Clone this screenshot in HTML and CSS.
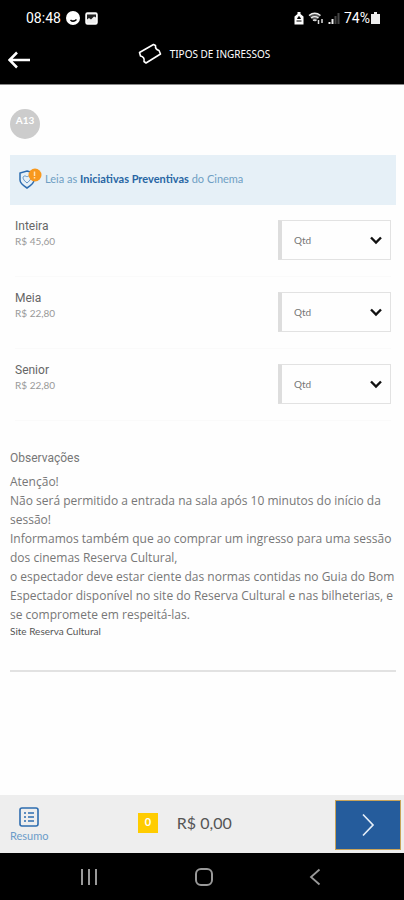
FILE: index.html
```html
<!DOCTYPE html>
<html lang="pt-BR">
<head>
<meta charset="utf-8">
<meta name="viewport" content="width=device-width, initial-scale=1">
<title>Tipos de ingressos</title>
<link rel="stylesheet" href="styles.css">
</head>
<body>
<header class="top">
  <div class="status">
    <div class="status-group">
      <span class="clock">08:48</span>
      <svg width="14" height="14" viewBox="0 0 14 14" aria-hidden="true"><circle cx="7" cy="7" r="7" fill="#fff"/><path d="M4.500 9c1.500 1.500 4 1.500 6-.5" fill="none" stroke="#000" stroke-width="1.500"/></svg>
      <svg width="13" height="13" viewBox="0 0 13 13" aria-hidden="true"><rect x="1" y="1" width="11" height="11" rx="1.500" fill="#eee" stroke="#fff" stroke-width="1.500"/><path d="M2 2.500h9v3L9 4.500 6 7.500 4 6 2 7.500z" fill="#222"/></svg>
    </div>
    <div class="status-group status-right">
      <svg width="10" height="13" viewBox="0 0 10 13" aria-hidden="true"><path d="M3.500 0h3v2L9.500 4.500v8h-9v-8L3.500 2z" fill="#fff"/><path d="M5 4.500l1.500 2h-3zM2.500 9h5" fill="#000" stroke="#000"/></svg>
      <svg width="16" height="13" viewBox="0 0 16 13" aria-hidden="true"><path d="M1 3.500c4-3 7.500-3 11.500 0L7 10z" fill="#555"/><path d="M1 3.500c4-3 7.500-3 11.500 0M3 6c3-2 4.500-2 7.500 0M5 8.500c1.500-1 2-1 3.500 0" fill="none" stroke="#eee" stroke-width="1.500"/><path d="M10.500 8v4M14 7v4" stroke="#ddd" stroke-width="1.500"/></svg>
      <svg width="12" height="13" viewBox="0 0 12 13" aria-hidden="true"><path d="M1.500 10v2M4.500 7v5" stroke="#eee" stroke-width="2"/><path d="M7.500 4v8M10.500 1v11" stroke="#444" stroke-width="2"/></svg>
      <span class="battery">74%<svg width="9" height="12" viewBox="0 0 9 12" aria-hidden="true"><path d="M3 0h3v2h3v10H0V2h3z" fill="#eee"/></svg></span>
    </div>
  </div>
  <div class="title-bar">
    <button class="back" type="button" aria-label="Voltar">
      <svg width="24" height="18" viewBox="0 0 24 18"><path d="M22 9H2M9 1.500L1.500 9 9 16.500" fill="none" stroke="#fff" stroke-width="2.500"/></svg>
    </button>
    <svg width="24" height="22" viewBox="0 0 24 22" aria-hidden="true"><path d="M1.500 9.500L15.500 1.500 17.500 2.500c-.3 3 1.500 4.500 3.500 5l1.500 3.500L8 20l-2-1.500c.8-3-1-5-3.500-5.500z" fill="none" stroke="#fff" stroke-width="1.600" stroke-linejoin="round"/></svg>
    <h1>TIPOS DE INGRESSOS</h1>
  </div>
</header>
<main>
  <div class="seat">A13</div>
  <a class="notice" href="#">
    <svg width="24" height="24" viewBox="0 0 24 24" aria-hidden="true"><path d="M9 4L16 6v7c0 3.500-3 5.500-7 8-4-2.500-7-4.500-7-8V6z" fill="none" stroke="#2e6db0" stroke-width="1.500"/><path d="M9 16c-5-4-4.500-6.500-2.500-7 1.500-.2 2.500 1 2.500 1s1-1.200 2.500-1c2 .5 2.500 3-2.500 7z" fill="none" stroke="#5c90c4"/><circle cx="17" cy="8" r="6.500" fill="#f8981d"/><path d="M16.500 4.500v4.500M16.500 10v1.500" stroke="#ffe0b5" stroke-width="1.500"/></svg>
    <span>Leia as <strong>Iniciativas Preventivas</strong> do Cinema</span>
  </a>
  <ul class="tickets">
    <li>
      <label for="inteira"><span class="kind">Inteira</span><span class="price">R$ 45,60</span></label>
      <div class="qty"><select id="inteira"><option>Qtd</option></select><svg width="12" height="9" viewBox="0 0 12 9" aria-hidden="true"><path d="M1 1.500l5 5 5-5" fill="none" stroke="#111" stroke-width="2.400"/></svg></div>
    </li>
    <li>
      <label for="meia"><span class="kind">Meia</span><span class="price">R$ 22,80</span></label>
      <div class="qty"><select id="meia"><option>Qtd</option></select><svg width="12" height="9" viewBox="0 0 12 9" aria-hidden="true"><path d="M1 1.500l5 5 5-5" fill="none" stroke="#111" stroke-width="2.400"/></svg></div>
    </li>
    <li>
      <label for="senior"><span class="kind">Senior</span><span class="price">R$ 22,80</span></label>
      <div class="qty"><select id="senior"><option>Qtd</option></select><svg width="12" height="9" viewBox="0 0 12 9" aria-hidden="true"><path d="M1 1.500l5 5 5-5" fill="none" stroke="#111" stroke-width="2.400"/></svg></div>
    </li>
  </ul>
  <section class="notes">
    <h2>Observações</h2>
    <p>Atenção!<br>Não será permitido a entrada na sala após 10 minutos do início da sessão!<br>Informamos também que ao comprar um ingresso para uma sessão dos cinemas Reserva Cultural,<br>o espectador deve estar ciente das normas contidas no Guia do Bom Espectador disponível no site do Reserva Cultural e nas bilheterias, e se compromete em respeitá-las.</p>
    <a class="site" href="#">Site Reserva Cultural</a>
  </section>
</main>
<footer>
  <div class="cart">
    <button class="summary" type="button">
      <svg width="20" height="20" viewBox="0 0 20 20" aria-hidden="true"><rect x="1" y="1" width="18" height="18" rx="2" fill="none" stroke="#2e6db0" stroke-width="1.600"/><path d="M5 6h2M5 10h2M5 14h2M9 6h6M9 10h6M9 14h6" stroke="#2e6db0" stroke-width="1.600"/></svg>
      <span>Resumo</span>
    </button>
    <div class="total"><span class="count">0</span><span>R$ 0,00</span></div>
    <button class="next" type="button" aria-label="Continuar">
      <svg width="14" height="24" viewBox="0 0 14 24"><path d="M2 1.500L12 12 2 22.500" fill="none" stroke="#e4eef8" stroke-width="1.700"/></svg>
    </button>
  </div>
  <nav class="system">
    <button type="button" aria-label="Recentes"><svg width="18" height="18" viewBox="0 0 18 18"><path d="M2 1v16M9 1v16M16 1v16" stroke="#999" stroke-width="2"/></svg></button>
    <button type="button" aria-label="Início"><svg width="20" height="20" viewBox="0 0 20 20"><rect x="2" y="2" width="16" height="16" rx="5" fill="none" stroke="#999" stroke-width="2"/></svg></button>
    <button type="button" aria-label="Anterior"><svg width="12" height="18" viewBox="0 0 12 18"><path d="M10.500 1.500L2 9l8.500 7.500" fill="none" stroke="#999" stroke-width="1.800"/></svg></button>
  </nav>
</footer>
</body>
</html>
```
FILE: styles.css
```css
* { box-sizing: border-box; }
body {
  margin: 0;
  min-height: 100vh;
  display: flex;
  flex-direction: column;
  background: #fefefe;
  color: #777;
  font: 12px/19px "Open Sans", sans-serif;
}
button { border: 0; padding: 0; background: none; font: inherit; cursor: pointer; }
a { color: inherit; text-decoration: none; }
svg { display: block; flex: none; }
h1, h2, p, ul { margin: 0; padding: 0; font-weight: 400; }

.top { background: #000; color: #fff; border-bottom: 1px solid #888; }
.status {
  display: flex;
  justify-content: space-between;
  padding: 8px 24px 0 26px;
  height: 36px;
  font: 14px/20px Roboto, sans-serif;
}
.status-group { display: flex; align-items: center; height: 20px; gap: 5px; }
.status-right { gap: 4px; }
.battery { display: flex; align-items: center; gap: 1px; }
.title-bar {
  position: relative;
  display: flex;
  justify-content: center;
  align-items: center;
  gap: 8px;
  height: 48px;
  padding: 0 0 12px 4px;
}
.back { position: absolute; left: 8px; top: 15px; }
h1 { font: 10px/16px "Noto Sans", sans-serif; }

main { flex: 1; padding: 24px 8px 24px 10px; }
.seat {
  width: 30px;
  height: 30px;
  border-radius: 50%;
  background: #ccc;
  color: #fff;
  font: 700 10px/22px Lato, sans-serif;
  text-align: center;
}
.notice {
  display: flex;
  align-items: center;
  gap: 3px;
  height: 50px;
  margin-top: 16px;
  padding: 0 8px 2px;
  background: #e6f0f7;
  color: #6f9fc4;
  font: 11px/16px Lato, sans-serif;
}
.notice strong { color: #2866a4; }

.tickets { list-style: none; padding: 0 5px; }
.tickets li {
  display: flex;
  justify-content: space-between;
  height: 72px;
  padding-top: 14px;
  border-bottom: 1px solid #fafafa;
}
.tickets label { display: flex; flex-direction: column; }
.kind { font: 12px/15px Roboto, sans-serif; color: #666; }
.price { font: 10px/14px Lato, sans-serif; color: #999; }
.qty {
  position: relative;
  width: 113px;
  height: 40px;
  margin-top: 1px;
  border: 1px solid #e2e2e2;
  border-left: 4px solid #ddd;
}
.qty select {
  width: 100%;
  height: 100%;
  padding: 0 12px;
  border: 0;
  background: transparent;
  appearance: none;
  color: #777;
  font: 10px/16px Lato, sans-serif;
}
.qty svg { position: absolute; right: 8px; top: 15px; pointer-events: none; }

.notes { margin-top: 29px; padding-bottom: 32px; border-bottom: 2px solid #e2e2e2; }
h2 { margin-bottom: 6px; font: 12px/16px Roboto, sans-serif; color: #777; }
.site { display: block; font: 10px/14px Lato, sans-serif; color: #555; }

.cart {
  display: flex;
  justify-content: space-between;
  align-items: center;
  height: 58px;
  padding: 4px 3px 2px 10px;
  background: #eee;
}
.summary {
  display: flex;
  flex-direction: column;
  align-items: center;
  gap: 1px;
  color: #6c9cc9;
  font: 11px/16px Lato, sans-serif;
}
.total {
  display: flex;
  align-items: center;
  gap: 19px;
  padding: 0 14px 4px 0;
  color: #555;
  font: 16px/20px Lato, sans-serif;
}
.count {
  width: 20px;
  height: 20px;
  background: #fc0;
  color: #fff;
  font-size: 11px;
  font-weight: 700;
  line-height: 17px;
  text-align: center;
}
.next {
  display: flex;
  justify-content: center;
  align-items: center;
  width: 66px;
  height: 50px;
  border: 1px solid #c9a45a;
  background: #255c9c;
}
.system {
  display: flex;
  justify-content: space-between;
  align-items: center;
  height: 47px;
  padding: 0 83px 0 80px;
  background: #000;
}
```
